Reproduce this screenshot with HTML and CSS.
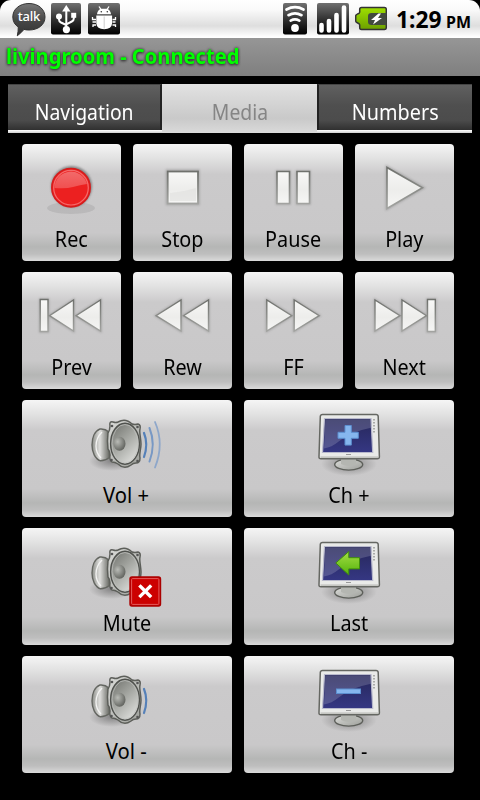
FILE: index.html
```
<!DOCTYPE html>
<html lang="en">
<head>
<meta charset="utf-8">
<title>Remote</title>
<link rel="stylesheet" href="styles.css">
</head>
<body>
<svg class="defs" width="0" height="0">
  <defs>
    <linearGradient id="dark" x1="0" y1="0" x2="0" y2="1"><stop offset="0" stop-color="#707070"/><stop offset=".5" stop-color="#333"/><stop offset="1" stop-color="#000"/></linearGradient>
    <linearGradient id="bubble" x1="0" y1="0" x2="0" y2="1"><stop offset="0" stop-color="#777"/><stop offset=".5" stop-color="#484848"/><stop offset="1" stop-color="#333"/></linearGradient>
    <linearGradient id="green" x1="0" y1="0" x2="0" y2="1"><stop offset="0" stop-color="#9fe000"/><stop offset="1" stop-color="#6ca000"/></linearGradient>
    <linearGradient id="edge" x1="0" y1="0" x2="0" y2="1"><stop offset="0" stop-color="#6f716d"/><stop offset="1" stop-color="#a2a3a0"/></linearGradient>
    <linearGradient id="face" x1="0" y1="0" x2="0" y2="1"><stop offset="0" stop-color="#f8f8f7"/><stop offset=".55" stop-color="#ededeb"/><stop offset="1" stop-color="#f6f6f5"/></linearGradient>
    <linearGradient id="gloss" x1="0" y1="0" x2="0" y2="1"><stop offset="0" stop-color="#f26a6a"/><stop offset="1" stop-color="#f05050"/></linearGradient>
    <linearGradient id="metal" x1="0" y1="0" x2="1" y2="1"><stop offset="0" stop-color="#dcddda"/><stop offset="1" stop-color="#9c9e99"/></linearGradient>
    <linearGradient id="back" x1="0" y1="0" x2="1" y2="0"><stop offset="0" stop-color="#8e908b"/><stop offset=".45" stop-color="#dededc"/><stop offset="1" stop-color="#666862"/></linearGradient>
    <linearGradient id="cone" x1="0" y1="0" x2=".7" y2="1"><stop offset="0" stop-color="#6c6e69"/><stop offset=".5" stop-color="#a3a5a0"/><stop offset="1" stop-color="#dcddda"/></linearGradient>
    <radialGradient id="hub" cx=".35" cy=".35" r=".7"><stop offset="0" stop-color="#b9bbb6"/><stop offset="1" stop-color="#60625d"/></radialGradient>
    <radialGradient id="shade"><stop offset="0" stop-color="#000" stop-opacity=".35"/><stop offset="1" stop-color="#000" stop-opacity="0"/></radialGradient>
    <linearGradient id="screen" x1="0" y1="0" x2="0" y2="1"><stop offset="0" stop-color="#26275a"/><stop offset="1" stop-color="#353783"/></linearGradient>
    <linearGradient id="leaf" x1="0" y1="0" x2="0" y2="1"><stop offset="0" stop-color="#a4dd45"/><stop offset="1" stop-color="#54b30b"/></linearGradient>
    <filter id="soft" x="-20%" y="-20%" width="140%" height="140%"><feGaussianBlur stdDeviation="1.1"/></filter>
    <g id="speaker">
      <ellipse cx="90" cy="61" rx="23" ry="10" fill="url(#shade)"/>
      <path d="M87 32Q83 28.500 78 29C72.500 31 70 38 70 45s3 14 8.500 15.800q5 0 9-3.300z" fill="url(#back)" stroke="#646661" stroke-width="1.400"/>
      <path d="M80 32c-4 4-6 9-6 14s2 9 5 12" fill="none" stroke="#f3f3f2" stroke-width="1.300"/>
      <path d="M88 26q-1-5 3-4 3 1 5 0c5-3 10-2 14 2q3 1 6 0 3 1 2 5c-1 3 1 10 1 15s-2 10-1 14q0 5-4 5-3 0-5 2c-4 3-9 3-13-1q-3-2-6-2-3-2-2-7 0-4-2-6-1-8 0-16 2-3 2-7z" fill="url(#metal)" stroke="#5d5f5a" stroke-width="1.500"/>
      <ellipse cx="103" cy="43.700" rx="14.400" ry="20.500" fill="url(#cone)" stroke="#50524e" stroke-width="1.400"/>
      <ellipse cx="103" cy="43.700" rx="13" ry="19.200" fill="none" stroke="#c0c1be" stroke-width=".7"/>
      <ellipse cx="97.500" cy="43.800" rx="6" ry="7" fill="url(#hub)"/>
      <g fill="#555"><circle cx="90" cy="26" r="1.300"/><circle cx="115.500" cy="27" r="1.300"/><circle cx="89.500" cy="60" r="1.300"/><circle cx="115.500" cy="61" r="1.300"/></g>
    </g>
    <g id="monitor">
      <ellipse cx="105" cy="64" rx="28" ry="12" fill="url(#shade)"/>
      <ellipse cx="104.700" cy="64.500" rx="14" ry="5.600" fill="url(#metal)" stroke="#5d5f5a" stroke-width="1.400"/>
      <path d="M97 58h15v6q-7 4-15 0z" fill="#b4b6b1"/>
      <path d="M78.500 14.400h53.500q2 0 2.200 2l1.200 40.300q0 2-2.200 2H77q-2.200 0-2-2L76.300 16.400q.2-2 2.200-2z" fill="#e9eae8" stroke="#656762" stroke-width="1.500"/>
      <path d="M76.500 57.200h58" stroke="#b9bab6" stroke-width="1.200"/>
      <path d="M80.500 18.500h46.500l1.700 34H78.500z" fill="url(#screen)" stroke="#b8b9cc" stroke-width="1.200"/>
      <path d="M81.200 19.200h45.200l.6 8.500Q105 32 94 42q-6 5-14 6.500z" fill="#fff" opacity=".17"/>
      <path d="M130 19v15" stroke="#9a9c98" stroke-width="1.600" stroke-dasharray="1.500 1.500"/>
      <path d="M102 54.500h5" stroke="#999" stroke-width="1"/>
    </g>
  </defs>
</svg>

<header class="status">
  <svg class="ic-talk" width="36" height="38" viewBox="12 0 36 38">
    <path d="M29 3.500C38 3.500 45 9 45 17s-7 13-16 13q-3 0-5-.6Q21 33 17.300 35.800q1-4.500 1-8.800C15 25 12.800 21.500 12.800 17c0-8 7-13.500 16.200-13.500z" fill="url(#bubble)" stroke="#333"/>
    <text class="talk" x="17.800" y="21.200" textLength="22.500" lengthAdjust="spacing">talk</text>
  </svg>
  <svg class="ic-usb" width="30" height="38" viewBox="51 0 30 38">
    <rect x="51" y="3" width="30" height="31.500" rx="2" fill="url(#dark)"/>
    <path d="M66.300 29V9M59 17v2.500q0 2 2 3l5.300 2.500M73.800 16v2.500q0 2-2 3l-5.500 2.800" fill="none" stroke="#fff" stroke-width="2"/>
    <path d="M66.300 5l4.200 6.500h-8.400z" fill="#fff"/><circle cx="66.400" cy="29.600" r="3.600" fill="#fff"/><circle cx="59" cy="16.400" r="3" fill="#fff"/><rect x="71.200" y="12.800" width="5" height="5" fill="#fff"/>
  </svg>
  <svg class="ic-bug" width="32" height="38" viewBox="88 0 32 38">
    <rect x="88" y="3" width="32" height="31.500" rx="2" fill="url(#dark)"/>
    <g fill="#fff"><path d="M97 14.200q.5-4.500 4-5.500h6q3.500 1 4 5.500zM96.300 15.500h15.800v8q-.5 5.500-7.900 5.700-7.400-.2-7.900-5.700z"/></g>
    <path d="M101 9.500l-2-3M107 9.500l2-3M96 19.500h-3.500v-2.500M96 22h-3.500M96 25h-3v2M112.500 19.500h3v-2.500M112.500 22h3M112.500 25h3v2" fill="none" stroke="#fff" stroke-width="1.300"/>
    <path d="M104.200 16.500v12" stroke="#ccc"/><circle cx="101.300" cy="11.700" r=".8" fill="#333"/><circle cx="107.300" cy="11.700" r=".8" fill="#333"/>
  </svg>
  <svg class="ic-wifi" width="24" height="38" viewBox="283 0 24 38">
    <rect x="283" y="3" width="24" height="31.500" rx="2" fill="url(#dark)"/>
    <path d="M286.500 9.500q8.500-4.600 17 0M288.500 15.200q6.500-3.600 13 0M290.700 20.600q4.300-2.400 8.600 0" fill="none" stroke="#fff" stroke-width="2.700" stroke-linecap="round"/><circle cx="295" cy="28" r="3.900" fill="#fff"/>
  </svg>
  <svg class="ic-signal" width="32" height="38" viewBox="317 0 32 38">
    <rect x="317" y="3" width="32" height="31.500" rx="2" fill="url(#dark)"/>
    <path d="M321.500 25v5.500M329 21v9.500M336.500 15v15.500M344 7.500v23" stroke="#fff" stroke-width="4.600" stroke-linecap="round"/>
  </svg>
  <svg class="ic-batt" width="32" height="38" viewBox="355 0 32 38">
    <path d="M361.500 7.500H384.500q1.800 0 1.800 2v18q0 2-1.800 2h-23q-1.800 0-1.800-2V25q0-1.300-1.500-1.800l-1.300-.7q-1.200-.4-1.200-1.800v-4.500q0-1.400 1.200-1.800l1.300-.7q1.500-.5 1.500-1.800V9.500q0-2 1.800-2z" fill="url(#green)" stroke="#333" stroke-width="1.500"/>
    <path d="M386.500 13h-15q-3.500 0-3.500 3v6q0 3 3.500 3h15z" fill="#424a3e"/>
    <path d="M378.500 13.500l-7.500 6.500h4l-2 4.500 9-6.500h-4l3-4.500z" fill="#fff"/>
  </svg>
  <svg class="clock" width="78" height="38" viewBox="395 0 78 38">
    <text class="time" x="396" y="28" textLength="45.500" lengthAdjust="spacingAndGlyphs">1:29</text>
    <text class="ampm" x="446" y="28" textLength="25" lengthAdjust="spacingAndGlyphs">PM</text>
  </svg>
</header>

<div class="title"><span>livingroom - Connected</span></div>

<nav class="tabs">
  <div class="tab"><span>Navigation</span></div>
  <div class="tab active"><span>Media</span></div>
  <div class="tab last"><span>Numbers</span></div>
</nav>

<main class="pad">
  <div class="key"><svg class="art" width="99" height="82">
    <ellipse cx="49" cy="64" rx="24" ry="6" fill="#000" opacity=".08"/>
    <circle cx="49.500" cy="42.500" r="20.500" fill="#555" opacity=".6" filter="url(#soft)"/>
    <circle cx="49" cy="43.700" r="19.200" fill="#ec2020" stroke="#d51c1c" stroke-width="1.500"/>
    <path d="M32.500 44a16.500 16.500 0 0 1 32.500-4q-7 1-14 3t-18.500 1z" fill="url(#gloss)"/>
    <circle cx="49" cy="43.700" r="17.300" fill="none" stroke="#f46a6a" stroke-width="1.200"/>
  </svg><span class="label">Rec</span></div>
  <div class="key"><svg class="art" width="99" height="82">
    <rect x="34" y="26.500" width="31.500" height="33.500" fill="none" stroke="#777" stroke-width="2.500" opacity=".4" filter="url(#soft)"/>
    <rect x="34.700" y="27.500" width="30.300" height="32" fill="url(#face)" stroke="url(#edge)" stroke-width="1.800"/>
    <path d="M37 49q13-1 26-5v13H37z" fill="#dfe0dd" opacity=".6"/>
  </svg><span class="label">Stop</span></div>
  <div class="key"><svg class="art" width="99" height="82">
    <path d="M33 27.500h12.500v32H33zM53 27.500h12.500v32H53z" fill="none" stroke="#777" stroke-width="2.500" opacity=".4" filter="url(#soft)"/>
    <path d="M33 27.500h12.500v32H33zM53 27.500h12.500v32H53z" fill="url(#face)" stroke="url(#edge)" stroke-width="1.600"/>
  </svg><span class="label">Pause</span></div>
  <div class="key"><svg class="art" width="99" height="82">
    <path d="M32 23v41.500L68 43.700z" fill="none" stroke="#777" stroke-width="3" opacity=".4" filter="url(#soft)"/>
    <path d="M32 23.500v41L67.500 43.700z" fill="url(#face)" stroke="url(#edge)" stroke-width="1.600"/>
  </svg><span class="label">Play</span></div>

  <div class="key"><svg class="art" width="99" height="82">
    <path d="M18.200 27.500H26v32h-7.800zM51.500 28v31L27.500 43.700zM78.500 28v31L54 43.700z" fill="none" stroke="#777" stroke-width="2.500" opacity=".4" filter="url(#soft)"/>
    <path d="M18.200 27.500H26v32h-7.800zM51.500 28v31L27.500 43.700zM78.500 28v31L54 43.700z" fill="url(#face)" stroke="url(#edge)" stroke-width="1.400"/>
  </svg><span class="label">Prev</span></div>
  <div class="key"><svg class="art" width="99" height="82">
    <path d="M48 28v31L23 43.700zM75.500 28v31L50.500 43.700z" fill="none" stroke="#777" stroke-width="2.500" opacity=".4" filter="url(#soft)"/>
    <path d="M48 28v31L23 43.700zM75.500 28v31L50.500 43.700z" fill="url(#face)" stroke="url(#edge)" stroke-width="1.400"/>
  </svg><span class="label">Rew</span></div>
  <div class="key"><svg class="art" width="99" height="82">
    <path d="M22.800 28v31l25-15.300zM50.200 28v31l25-15.300z" fill="none" stroke="#777" stroke-width="2.500" opacity=".4" filter="url(#soft)"/>
    <path d="M22.800 28v31l25-15.300zM50.200 28v31l25-15.300z" fill="url(#face)" stroke="url(#edge)" stroke-width="1.400"/>
  </svg><span class="label">FF</span></div>
  <div class="key"><svg class="art" width="99" height="82">
    <path d="M20 28v31l25-15.300zM47 28v31l24.500-15.300zM72.500 27.500h7.800v32h-7.800z" fill="none" stroke="#777" stroke-width="2.500" opacity=".4" filter="url(#soft)"/>
    <path d="M20 28v31l25-15.300zM47 28v31l24.500-15.300zM72.500 27.500h7.800v32h-7.800z" fill="url(#face)" stroke="url(#edge)" stroke-width="1.400"/>
  </svg><span class="label">Next</span></div>

  <div class="key wide"><svg class="art" width="210" height="82"><use href="#speaker"/>
    <g fill="none" stroke-linecap="round"><path d="M122 33q4.500 11 0 24" stroke="#5580b8" stroke-width="2.200"/><path d="M127.500 28q6.500 16 0 33.500" stroke="#7898c4" stroke-width="2"/><path d="M133 22q9.500 22 0 45.500" stroke="#8ea7ca" stroke-width="1.800"/></g>
  </svg><span class="label vol">Vol +</span></div>
  <div class="key wide"><svg class="art" width="210" height="82"><use href="#monitor"/>
    <path d="M101 25.500h6.300v6.800h7v6h-7v6.800H101v-6.800h-7v-6h7z" fill="#86b6ee" stroke="#5c8fd0" stroke-width="1"/>
  </svg><span class="label">Ch +</span></div>

  <div class="key wide"><svg class="art" width="210" height="82"><use href="#speaker"/>
    <rect x="108" y="49" width="30.500" height="29" rx="2" fill="#cc0000" stroke="#a00" stroke-width="1.400"/>
    <rect x="109.600" y="50.600" width="27.300" height="25.800" rx="1" fill="none" stroke="#e25b5b" stroke-width="1"/>
    <path d="M118.500 58.500l9.500 9.500M128 58.500l-9.500 9.500" stroke="#fff" stroke-width="3.300" stroke-linecap="square"/>
  </svg><span class="label">Mute</span></div>
  <div class="key wide"><svg class="art" width="210" height="82"><use href="#monitor"/>
    <path d="M91.800 35l13-11.500v6.200h10.700v11.200h-10.700V47z" fill="url(#leaf)" stroke="#3f8f0a" stroke-width="1"/>
  </svg><span class="label">Last</span></div>

  <div class="key wide"><svg class="art" width="210" height="82"><use href="#speaker"/>
    <path d="M122 33q4.500 11 0 24" fill="none" stroke-linecap="round" stroke="#5580b8" stroke-width="2.200"/>
  </svg><span class="label vol">Vol -</span></div>
  <div class="key wide"><svg class="art" width="210" height="82"><use href="#monitor"/>
    <rect x="92.500" y="33" width="24" height="4.500" fill="#86b6ee" stroke="#5c8fd0"/>
  </svg><span class="label">Ch -</span></div>
</main>
</body>
</html>
```
FILE: styles.css
```
* { box-sizing: border-box; }
body {
  margin: 0;
  width: 480px;
  height: 800px;
  overflow: hidden;
  background: #000;
  font-family: "Noto Sans", "Open Sans", sans-serif;
}
svg { display: block; flex: none; }
.defs { position: absolute; }
.status {
  height: 38px;
  display: flex;
  padding-left: 12px;
  border-radius: 11px 11px 0 0;
  background: linear-gradient(#fff 0, #fafafa 25%, #dedede 68%, #ececec 80%, #fff 97%);
}
.ic-usb { margin-left: 3px; }
.ic-bug { margin-left: 7px; }
.ic-wifi { margin-left: 163px; }
.ic-signal { margin-left: 10px; }
.ic-batt { margin-left: 6px; }
.clock { margin-left: 8px; }
.talk { font-size: 13px; font-weight: 500; fill: #fff; }
.time { font-size: 22.5px; font-weight: 700; }
.ampm { font-size: 16px; font-weight: 700; }
.title {
  height: 38px;
  padding-left: 6px;
  background: linear-gradient(#969696, #7f7f7f);
  line-height: 37px;
}
.title span {
  display: inline-block;
  font-size: 21px;
  font-weight: 700;
  color: #0f0;
  text-shadow: 0 0 3px #333, 0 1px 3px #333;
  transform: scaleX(.96);
  transform-origin: 0 50%;
  white-space: nowrap;
}
.tabs {
  height: 49px;
  margin: 8px 8px 0;
  display: grid;
  grid-template-columns: 154px 155px 155px;
  background: linear-gradient(#fff, #cfcfcf) 0 46px / 100% 3px no-repeat;
}
.tab {
  height: 46px;
  line-height: 52px;
  text-align: center;
  font-size: 22px;
  color: #fff;
  background: linear-gradient(#606060 0, #4f4f4f 45%, #4c4c4c 78%, #303030 100%);
  border-right: 2px solid #222;
  border-top: 1px solid #444;
}
.tab.active {
  height: 49px;
  color: #858585;
  background: linear-gradient(#e2e2e2, #c9c9c9 70%, #dadada);
  border: 0;
  padding-top: 1px;
}
.tab.last { border-right: 0; border-left: 2px solid #222; }
.tab span, .label { display: inline-block; transform: scaleX(.92); white-space: nowrap; }
.tab span { transform: scaleX(.88); }
.tab.last span { transform: scaleX(.9); }
.pad {
  margin: 11px 26px 0 22px;
  display: grid;
  grid-template-columns: repeat(4, 99px);
  grid-auto-rows: 117px;
  gap: 11px 12px;
}
.key {
  display: flex;
  flex-direction: column;
  align-items: center;
  border-radius: 4px;
  background: linear-gradient(#f5f5f5 0, #e2e2e2 12%, #cbcacb 26%, #c9c8c9 76%, #b5b6b5 88%, #bebebe 94%, #dadada 100%);
}
.wide { grid-column: span 2; }
.label { font-size: 22px; line-height: 24px; color: #000; transform: scaleX(.9); }
.label.vol { transform: translateX(-1px) scaleX(.92); }
```
